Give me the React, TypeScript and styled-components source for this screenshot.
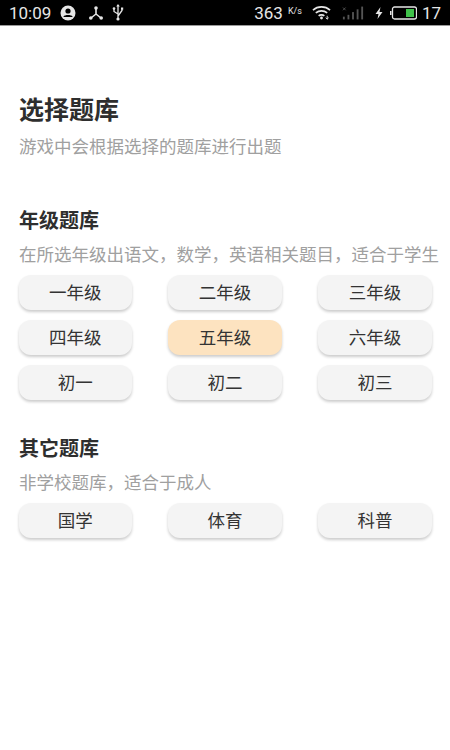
import React from "react";
import styled, { createGlobalStyle } from "styled-components";

const Global = createGlobalStyle`
  html, body { margin: 0; padding: 0; background: #fff; }
  body { font-family: "Noto Sans CJK SC", "Noto Sans", sans-serif; }
`;
const Page = styled.div`
  width: 450px;
  height: 750px;
  overflow: hidden;
  background: #fff;
  display: flex;
  flex-direction: column;
`;
const StatusBar = styled.div`
  height: 25px;
  background: #000;
  border-bottom: 1px solid #9a9a9a;
  box-sizing: content-box;
  display: flex;
  align-items: center;
  justify-content: space-between;
  padding: 0 9px 0 9px;
  color: #e6e6e6;
  font-family: "Roboto", sans-serif;
`;
const StatusGroup = styled.div`
  display: flex;
  align-items: center;
`;
const Clock = styled.span`
  font-size: 17px;
  margin-right: 9px;
`;
const Speed = styled.span`
  font-size: 17px;
  margin-right: 5px;
`;
const SpeedUnit = styled.span`
  font-size: 9px;
  margin-right: 10px;
  margin-top: -3px;
`;
const Level = styled.span`
  font-size: 17px;
  margin-left: 5px;
`;
const Icon = styled.svg<{ $gap?: number }>`
  display: block;
  margin-right: ${(p) => p.$gap ?? 0}px;
`;
const Content = styled.main`
  padding: 65px 18px 0 19px;
  display: flex;
  flex-direction: column;
`;
const Title = styled.h1`
  margin: 0;
  font-size: 25px;
  line-height: 34px;
  font-weight: 700;
  color: #2e2e2e;
`;
const Subtitle = styled.p`
  margin: 9px 0 0;
  font-size: 17.5px;
  line-height: 24px;
  color: #a0a0a0;
  white-space: nowrap;
`;
const Section = styled.section<{ $top: number }>`
  margin-top: ${(p) => p.$top}px;
`;
const SectionTitle = styled.h2`
  margin: 0;
  font-size: 20px;
  line-height: 28px;
  font-weight: 700;
  color: #2e2e2e;
`;
const SectionNote = styled.p`
  margin: 8px 0 0;
  font-size: 17.5px;
  line-height: 24px;
  color: #a0a0a0;
  white-space: nowrap;
`;
const Grid = styled.div`
  margin: 9px 0.3px 0 -0.5px;
  display: grid;
  grid-template-columns: repeat(3, 113.4px);
  justify-content: space-between;
  row-gap: 10.5px;
`;
const Choice = styled.button<{ $active?: boolean }>`
  height: 34.5px;
  padding: 0;
  border: 0;
  border-radius: 12px;
  background: ${(p) => (p.$active ? "#fde3c0" : "#f4f4f4")};
  box-shadow: 0 2px 3px rgba(0, 0, 0, 0.2);
  color: #333;
  font-family: inherit;
  font-size: 17.5px;
  line-height: 34.5px;
`;

const grades = ["一年级", "二年级", "三年级", "四年级", "五年级", "六年级", "初一", "初二", "初三"];
const others = ["国学", "体育", "科普"];

export default function App() {
  return (
    <Page>
      <Global />
      <StatusBar>
        <StatusGroup>
          <Clock>10:09</Clock>
          <Icon $gap={12} width="16" height="16" viewBox="0 0 16 16">
            <circle cx="8" cy="8" r="7.5" fill="#e6e6e6" />
            <circle cx="8" cy="6" r="2.6" fill="#000" />
            <path d="M3.5 11.5c1-2 8-2 9 0v.5h-9z" fill="#000" />
          </Icon>
          <Icon $gap={8} width="16" height="16" viewBox="0 0 16 16">
            <path d="M8 3v6M8 9l-5 4M8 9l5 4" stroke="#e6e6e6" strokeWidth="1.6" fill="none" />
            <circle cx="8" cy="3" r="1.8" fill="#e6e6e6" />
            <circle cx="2.8" cy="13" r="1.8" fill="#e6e6e6" />
            <circle cx="13.2" cy="13" r="1.8" fill="#e6e6e6" />
          </Icon>
          <Icon width="12" height="17" viewBox="0 0 12 17">
            <path d="M6 1v15M2 5v2.5l4 2.5M10 5v1.5L6 12" stroke="#e6e6e6" strokeWidth="1.3" fill="none" />
            <path d="M6 0l1.8 2.5H4.2z" fill="#e6e6e6" />
            <circle cx="2" cy="4.5" r="1.3" fill="#e6e6e6" />
            <rect x="9" y="3.5" width="2.2" height="2.2" fill="#e6e6e6" />
            <circle cx="6" cy="15" r="1.6" fill="#e6e6e6" />
          </Icon>
        </StatusGroup>
        <StatusGroup>
          <Speed>363</Speed>
          <SpeedUnit>K/s</SpeedUnit>
          <Icon $gap={11} width="19" height="15" viewBox="0 0 20 15">
            <path d="M1 5c5-4.500 13-4.500 18 0M4 8c3.500-3 8.500-3 12 0M7 11c1.500-1.300 4.500-1.300 6 0" stroke="#e6e6e6" strokeWidth="1.7" fill="none" />
            <circle cx="10" cy="13.300" r="1.500" fill="#e6e6e6" />
            <path d="M16 11v3.500M14.500 13l1.500 1.500 1.500-1.500" stroke="#e6e6e6" strokeWidth="1" fill="none" />
          </Icon>
          <Icon $gap={11} width="22" height="16" viewBox="0 0 24 16">
            <rect x="1" y="12" width="2" height="3" fill="#555" />
            <rect x="6" y="10" width="2" height="5" fill="#555" />
            <rect x="11" y="7" width="2" height="8" fill="#555" />
            <rect x="16" y="4" width="2" height="11" fill="#555" />
            <rect x="21" y="1" width="2" height="14" fill="#555" />
            <path d="M1 2l3 3M4 2L1 5" stroke="#666" strokeWidth="0.8" />
          </Icon>
          <Icon $gap={7} width="8" height="12" viewBox="0 0 8 12">
            <path d="M5.500 0L0.500 7h3L2.500 12l5-7h-3z" fill="#e6e6e6" />
          </Icon>
          <Icon width="27" height="14" viewBox="0 0 27 14">
            <rect x="0" y="5" width="1.500" height="4" fill="#e6e6e6" />
            <rect x="2.500" y="1" width="24" height="12" rx="2" fill="none" stroke="#e6e6e6" strokeWidth="1.300" />
            <rect x="16" y="3" width="8" height="8" fill="#3fc24a" />
          </Icon>
          <Level>17</Level>
        </StatusGroup>
      </StatusBar>
      <Content>
        <Title>选择题库</Title>
        <Subtitle>游戏中会根据选择的题库进行出题</Subtitle>
        <Section $top={48}>
          <SectionTitle>年级题库</SectionTitle>
          <SectionNote>在所选年级出语文，数学，英语相关题目，适合于学生</SectionNote>
          <Grid>
            {grades.map((g) => (
              <Choice key={g} $active={g === "五年级"}>{g}</Choice>
            ))}
          </Grid>
        </Section>
        <Section $top={34.5}>
          <SectionTitle>其它题库</SectionTitle>
          <SectionNote>非学校题库，适合于成人</SectionNote>
          <Grid>
            {others.map((g) => (
              <Choice key={g}>{g}</Choice>
            ))}
          </Grid>
        </Section>
      </Content>
    </Page>
  );
}
